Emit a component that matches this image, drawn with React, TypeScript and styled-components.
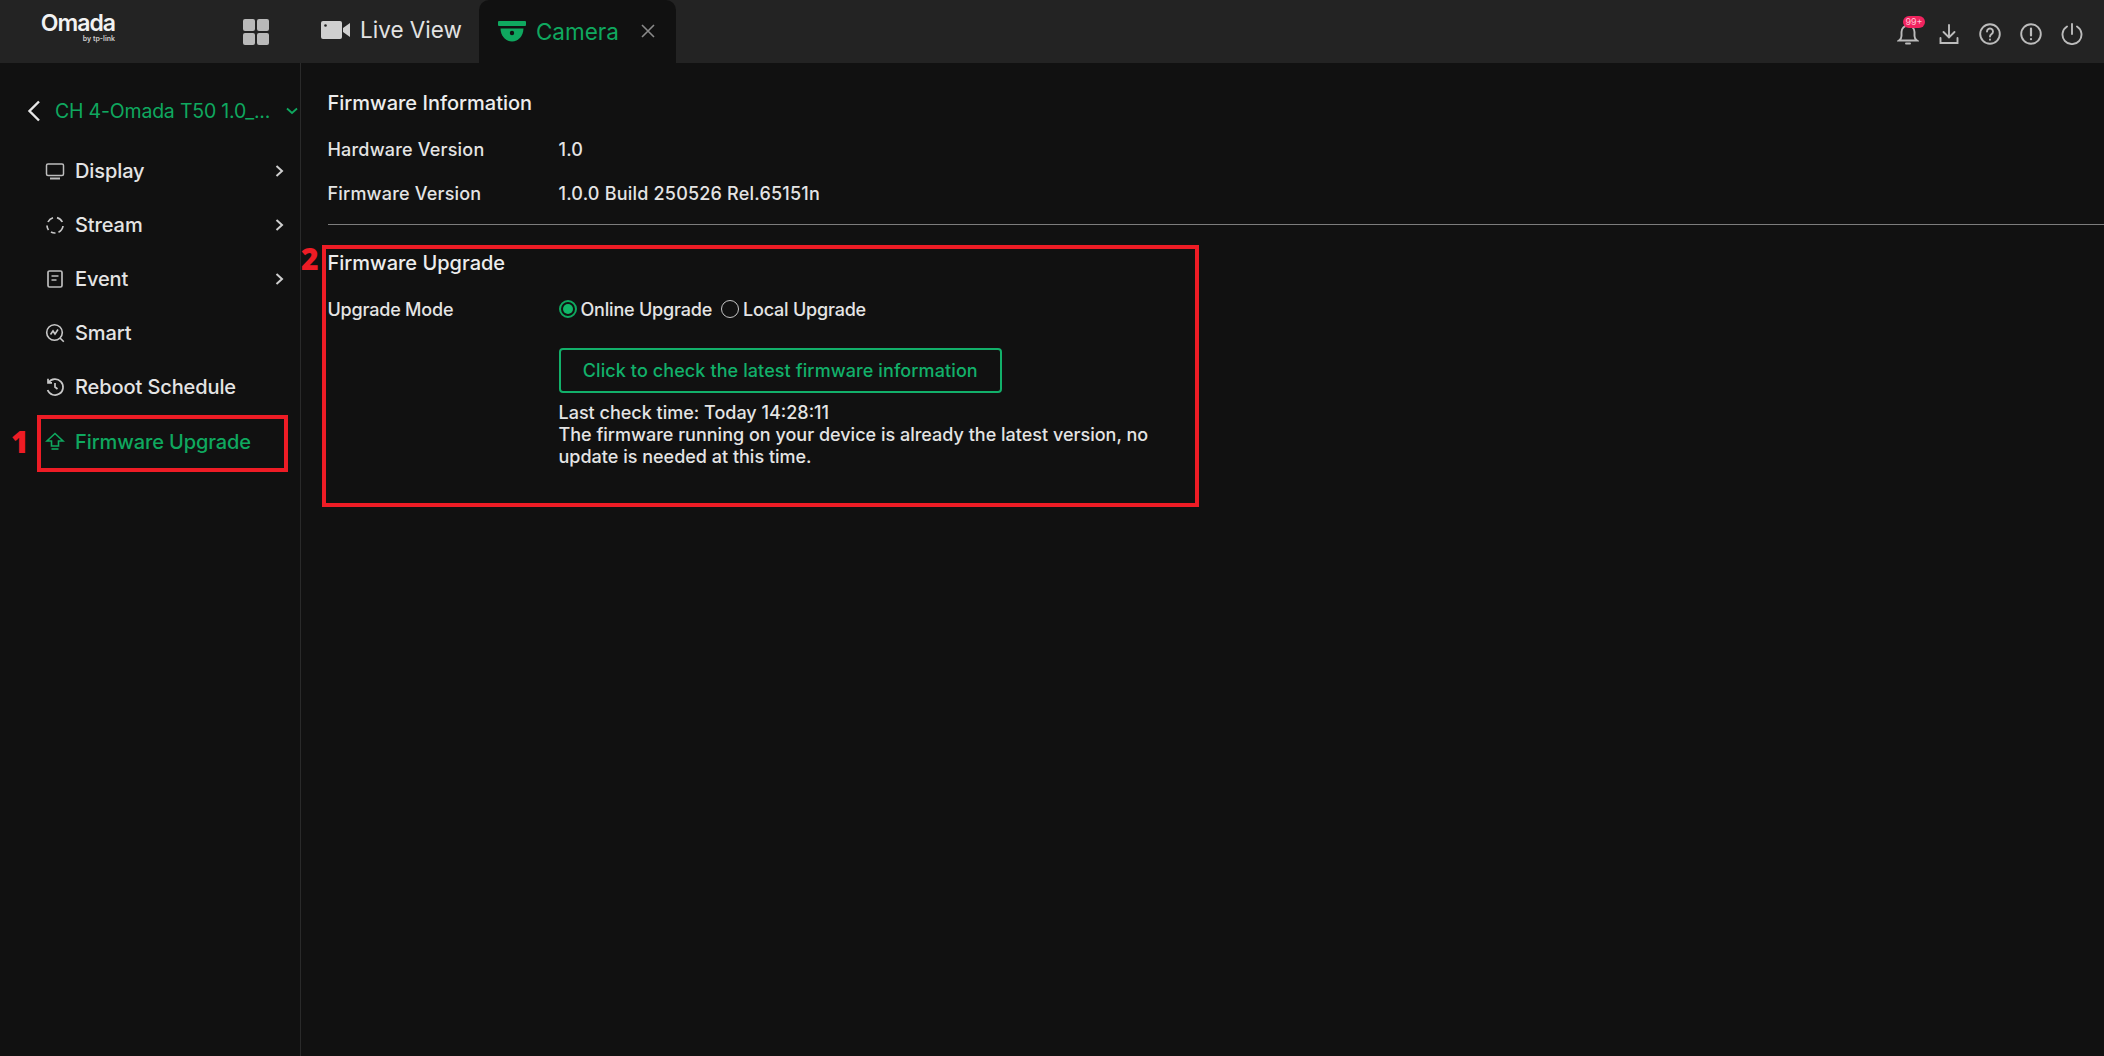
import React from "react";
import styled, { createGlobalStyle } from "styled-components";

const GREEN = "#0fa85f";
const TEXT = "#e4e4e4";
const RED = "#ee1c25";

const GlobalStyle = createGlobalStyle`
    html, body, #root {
        margin: 0;
        height: 100%;
        background: #111111;
    }
    body {
        font-family: Inter, "Noto Sans", "Liberation Sans", sans-serif;
        color: ${TEXT};
    }
`;

const Page = styled.div`
    display: flex;
    flex-direction: column;
    height: 1056px;
    overflow: hidden;
`;

/* top bar */

const TopBar = styled.header`
    display: flex;
    align-items: stretch;
    flex: 0 0 63px;
    background: #232323;
`;

const Logo = styled.div`
    display: flex;
    flex-direction: column;
    align-items: flex-end;
    justify-content: flex-start;
    width: 75px;
    margin: 12px 0 0 40px;
    color: #f2f2f2;
`;

const LogoName = styled.span`
    font-size: 23px;
    line-height: 22px;
    font-weight: 600;
    letter-spacing: -1px;
`;

const LogoSub = styled.span`
    font-size: 7px;
    line-height: 9px;
    font-weight: 600;
    color: #cfcfcf;
`;

const GridButton = styled.div`
    display: grid;
    grid-template-columns: 12px 12px;
    grid-template-rows: 12px 12px;
    gap: 2px;
    align-self: center;
    margin-left: 128px;

    span {
        background: #b9b9b9;
        border-radius: 2px;
    }
`;

const Tab = styled.div<{ $active?: boolean }>`
    display: flex;
    align-items: center;
    gap: 10px;
    padding: ${p => (p.$active ? "0 21px 1px 19px" : "0 17px 4px 0")};
    margin-left: ${p => (p.$active ? "0" : "52px")};
    font-size: 22.5px;
    color: ${p => (p.$active ? GREEN : "#e2e2e2")};
    background: ${p => (p.$active ? "#111111" : "transparent")};
    border-radius: 10px 10px 0 0;
`;

const CloseMark = styled.svg`
    margin-left: 12px;
`;

const TopIcons = styled.div`
    display: flex;
    align-items: center;
    gap: 19px;
    margin-left: auto;
    padding: 4px 21px 0 0;
    color: #bcbcbc;
`;

const BellWrap = styled.div`
    position: relative;
    display: flex;
`;

const Badge = styled.span`
    position: absolute;
    top: -7px;
    left: 6px;
    width: 22px;
    height: 12px;
    border-radius: 6px;
    background: #f0245f;
    color: #ffc0d2;
    font-size: 9px;
    line-height: 12px;
    text-align: center;
`;

/* sidebar */

const Body = styled.div`
    display: flex;
    flex: 1;
    min-height: 0;
`;

const Sidebar = styled.aside`
    flex: 0 0 300px;
    border-right: 1px solid #2a2a2a;
    padding-top: 27px;
`;

const DeviceRow = styled.div`
    display: flex;
    align-items: center;
    height: 42px;
    padding-left: 27px;
    color: ${GREEN};
    font-size: 19.5px;
    letter-spacing: -0.2px;
    white-space: nowrap;
`;

const DeviceName = styled.span`
    margin-left: 14px;
    width: 231px;
`;

const Menu = styled.nav`
    margin-top: 12px;
`;

const MenuItem = styled.div<{ $active?: boolean }>`
    position: relative;
    display: flex;
    align-items: center;
    height: 54.1px;
    padding-left: 45px;
    font-size: 20px;
    font-weight: 500;
    letter-spacing: -0.1px;
    color: ${p => (p.$active ? GREEN : TEXT)};
`;

const MenuLabel = styled.span`
    margin-left: 10px;
`;

const MenuChevron = styled.svg`
    position: absolute;
    left: 275px;
    color: #cfcfcf;
`;

const Callout = styled.div`
    position: absolute;
    left: 37px;
    top: 1px;
    width: 251px;
    height: 57px;
    box-sizing: border-box;
    border: 4px solid ${RED};
`;

const CalloutNumber = styled.span`
    position: absolute;
    font-family: "Open Sans", "Noto Sans", sans-serif;
    font-size: 30px;
    line-height: 30px;
    font-weight: 800;
    color: ${RED};
`;

const SideNumber = styled(CalloutNumber)`
    left: 11px;
    top: 13px;
`;

const SectionNumber = styled(CalloutNumber)`
    left: -25px;
    top: -5px;
`;

/* main */

const Main = styled.main`
    flex: 1;
    padding-top: 28px;
`;

const Info = styled.section`
    padding-left: 26.5px;
`;

const Title = styled.h2`
    margin: 0;
    font-size: 20px;
    line-height: 24px;
    font-weight: 500;
    color: #ededed;
`;

const Row = styled.div`
    display: flex;
    align-items: center;
    height: 44px;
    font-size: 18px;
    font-weight: 500;
    letter-spacing: 0.2px;
`;

const RowLabel = styled.div<{ $tight?: boolean }>`
    flex: 0 0 231px;
    letter-spacing: ${p => (p.$tight ? "-0.2px" : "inherit")};
`;

const InfoRows = styled.div`
    margin-top: 12px;
`;

const Divider = styled.hr`
    margin: 9px 0 20px 27px;
    border: 0;
    height: 1px;
    background: #7d7d7d;
`;

const UpgradeSection = styled.section`
    position: relative;
    box-sizing: border-box;
    width: 877px;
    height: 262px;
    margin-left: 21px;
    padding: 2px 0 0 1.5px;
    border: 4px solid ${RED};
`;

const UpgradeRow = styled(Row)`
    margin-top: 12px;
`;

const RadioGroup = styled.div`
    display: flex;
    align-items: center;
    letter-spacing: -0.2px;
`;

const RadioOption = styled.label`
    display: flex;
    align-items: center;
    gap: 4px;
    margin-right: 9px;
`;

const Radio = styled.span<{ $checked?: boolean }>`
    box-sizing: border-box;
    width: 18px;
    height: 18px;
    border-radius: 50%;
    border: ${p => (p.$checked ? `2px solid ${GREEN}` : "1.5px solid #c4c4c4")};
    padding: 2px;

    &::after {
        content: "";
        display: ${p => (p.$checked ? "block" : "none")};
        width: 100%;
        height: 100%;
        border-radius: 50%;
        background: #10b868;
    }
`;

const CheckColumn = styled.div`
    margin: 17px 0 0 231px;
    width: 610px;
`;

const CheckButton = styled.button`
    display: block;
    box-sizing: border-box;
    width: 443.5px;
    height: 45px;
    padding: 0;
    background: transparent;
    border: 2px solid #12b06a;
    border-radius: 4px;
    color: #12b06a;
    font-family: inherit;
    font-size: 18px;
    font-weight: 500;
    letter-spacing: 0.1px;
`;

const Result = styled.p`
    margin: 9px 0 0;
    font-size: 18px;
    font-weight: 500;
    line-height: 22px;
`;

const Back = () => (
    <svg width="14" height="22" viewBox="0 0 14 22" fill="none" stroke="#e8e8e8" strokeWidth="2.4">
        <path d="M12 1.500 2.500 11l9.500 9.500" />
    </svg>
);

const SmallDown = () => (
    <svg width="12" height="8" viewBox="0 0 12 8" fill="none" stroke={GREEN} strokeWidth="1.8">
        <path d="M1 1.500 6 6l5-4.500" />
    </svg>
);

const Chevron = () => (
    <MenuChevron width="9" height="14" viewBox="0 0 9 14" fill="none" stroke="currentColor" strokeWidth="2">
        <path d="M1.500 2 7 7l-5.500 5" />
    </MenuChevron>
);

const iconProps = { width: 20, height: 20, viewBox: "0 0 20 20", fill: "none", stroke: "currentColor", strokeWidth: 1.5 };

const DisplayIcon = () => (
    <svg {...iconProps} stroke="#bdbdbd">
        <rect x="1.500" y="3" width="17" height="11.500" rx="1.500" />
        <path d="M5 17.500h10" strokeWidth="2" />
    </svg>
);

const StreamIcon = () => (
    <svg {...iconProps} stroke="#c8c8c8" strokeWidth="1.7">
        <path d="M3 7a8 8 0 0 1 5-4.300M12 2.600A8 8 0 0 1 17.300 7M18 11a8 8 0 0 1-4.500 6.200M10.500 18A8 8 0 0 1 6 17M3.500 15A8 8 0 0 1 2 10.500" />
    </svg>
);

const EventIcon = () => (
    <svg {...iconProps} stroke="#bdbdbd" strokeWidth="1.7">
        <rect x="3" y="2" width="14" height="16" rx="1.500" />
        <path d="M6.500 7h7M6.500 11h5" />
    </svg>
);

const SmartIcon = () => (
    <svg {...iconProps} stroke="#c8c8c8" strokeWidth="1.6">
        <circle cx="9.500" cy="9.500" r="7.800" />
        <path d="m15 15 3.800 3.800M5.500 11.500 8 8l2 3 3-4.500" />
    </svg>
);

const RebootIcon = () => (
    <svg {...iconProps} stroke="#c8c8c8" strokeWidth="1.7">
        <path d="M3.500 5.500A8 8 0 1 1 2.600 13M3 1.800v4h4" />
        <path d="M10 6v4l2.500 2" />
    </svg>
);

const UpgradeIcon = () => (
    <svg {...iconProps} stroke={GREEN} strokeWidth="1.6">
        <path d="M10 1.500 2 9h4.500v5h7V9H18z" />
        <path d="M6.500 17h7" />
    </svg>
);

const CameraTabIcon = () => (
    <svg width="28" height="21" viewBox="0 0 28 21" fill={GREEN}>
        <rect x="0" y="0" width="28" height="5" rx="1" />
        <path d="M2.500 7.500h23c-.3 7.500-5 13-11.500 13S2.800 15 2.500 7.500z" />
        <circle cx="14" cy="12" r="2.200" fill="#111111" />
    </svg>
);

const VideoIcon = () => (
    <svg width="29" height="18" viewBox="0 0 29 18" fill="#d0d0d0">
        <rect x="0" y="0" width="21" height="18" rx="2" />
        <path d="M22 7l7-5v14l-7-5z" />
        <circle cx="4.500" cy="4.500" r="1.300" fill="#232323" />
    </svg>
);

const topIconProps = { width: 22, height: 22, viewBox: "0 0 22 22", fill: "none", stroke: "currentColor", strokeWidth: 1.9, strokeLinecap: "round" as const };

const BellIcon = () => (
    <svg {...topIconProps}>
        <path d="M2 17.500c1.500-1 2.500-2 2.500-4.500V9a6.500 6.500 0 0 1 13 0v4c0 2.500 1 3.500 2.500 4.500z" />
        <path d="M9 20.500h4" />
    </svg>
);

const DownloadIcon = () => (
    <svg {...topIconProps}>
        <path d="M11 2v12M5.500 9 11 14.500 16.500 9M2.500 15v5h17v-5" />
    </svg>
);

const HelpIcon = () => (
    <svg {...topIconProps}>
        <circle cx="11" cy="11" r="9.800" />
        <path d="M8 8.500a3 3 0 1 1 4.500 2.600c-1 .6-1.500 1.100-1.500 2.400M11 16.500v.2" />
    </svg>
);

const AlertIcon = () => (
    <svg {...topIconProps}>
        <circle cx="11" cy="11" r="9.800" />
        <path d="M11 5.500v7M11 16v.2" strokeWidth="2.200" />
    </svg>
);

const PowerIcon = () => (
    <svg {...topIconProps}>
        <path d="M6 3.500a9.500 9.500 0 1 0 10 0M11 1v10" />
    </svg>
);

const menu = [
    { label: "Display", icon: <DisplayIcon />, more: true },
    { label: "Stream", icon: <StreamIcon />, more: true },
    { label: "Event", icon: <EventIcon />, more: true },
    { label: "Smart", icon: <SmartIcon /> },
    { label: "Reboot Schedule", icon: <RebootIcon /> },
    { label: "Firmware Upgrade", icon: <UpgradeIcon />, active: true },
];

const App = () => {
    return (
        <Page>
            <GlobalStyle />
            <TopBar>
                <Logo>
                    <LogoName>Omada</LogoName>
                    <LogoSub>by tp-link</LogoSub>
                </Logo>
                <GridButton>
                    <span /><span /><span /><span />
                </GridButton>
                <Tab>
                    <VideoIcon />
                    Live View
                </Tab>
                <Tab $active>
                    <CameraTabIcon />
                    Camera
                    <CloseMark width="14" height="14" viewBox="0 0 14 14" fill="none" stroke="#8a8a8a" strokeWidth="1.6">
                        <path d="M1 1l12 12M13 1 1 13" />
                    </CloseMark>
                </Tab>
                <TopIcons>
                    <BellWrap>
                        <BellIcon />
                        <Badge>99+</Badge>
                    </BellWrap>
                    <DownloadIcon />
                    <HelpIcon />
                    <AlertIcon />
                    <PowerIcon />
                </TopIcons>
            </TopBar>
            <Body>
                <Sidebar>
                    <DeviceRow>
                        <Back />
                        <DeviceName>CH 4-Omada T50 1.0_...</DeviceName>
                        <SmallDown />
                    </DeviceRow>
                    <Menu>
                        {menu.map(item => (
                            <MenuItem key={item.label} $active={item.active}>
                                {item.icon}
                                <MenuLabel>{item.label}</MenuLabel>
                                {item.more && <Chevron />}
                                {item.active && (
                                    <>
                                        <Callout />
                                        <SideNumber>1</SideNumber>
                                    </>
                                )}
                            </MenuItem>
                        ))}
                    </Menu>
                </Sidebar>
                <Main>
                    <Info>
                        <Title>Firmware Information</Title>
                        <InfoRows>
                            <Row>
                                <RowLabel>Hardware Version</RowLabel>
                                1.0
                            </Row>
                            <Row>
                                <RowLabel>Firmware Version</RowLabel>
                                1.0.0 Build 250526 Rel.65151n
                            </Row>
                        </InfoRows>
                    </Info>
                    <Divider />
                    <UpgradeSection>
                        <SectionNumber>2</SectionNumber>
                        <Title>Firmware Upgrade</Title>
                        <UpgradeRow>
                            <RowLabel $tight>Upgrade Mode</RowLabel>
                            <RadioGroup>
                                <RadioOption>
                                    <Radio $checked />
                                    Online Upgrade
                                </RadioOption>
                                <RadioOption>
                                    <Radio />
                                    Local Upgrade
                                </RadioOption>
                            </RadioGroup>
                        </UpgradeRow>
                        <CheckColumn>
                            <CheckButton>Click to check the latest firmware information</CheckButton>
                            <Result>
                                Last check time: Today 14:28:11
                                <br />
                                The firmware running on your device is already the latest version, no update is needed at this time.
                            </Result>
                        </CheckColumn>
                    </UpgradeSection>
                </Main>
            </Body>
        </Page>
    );
};

export default App;
